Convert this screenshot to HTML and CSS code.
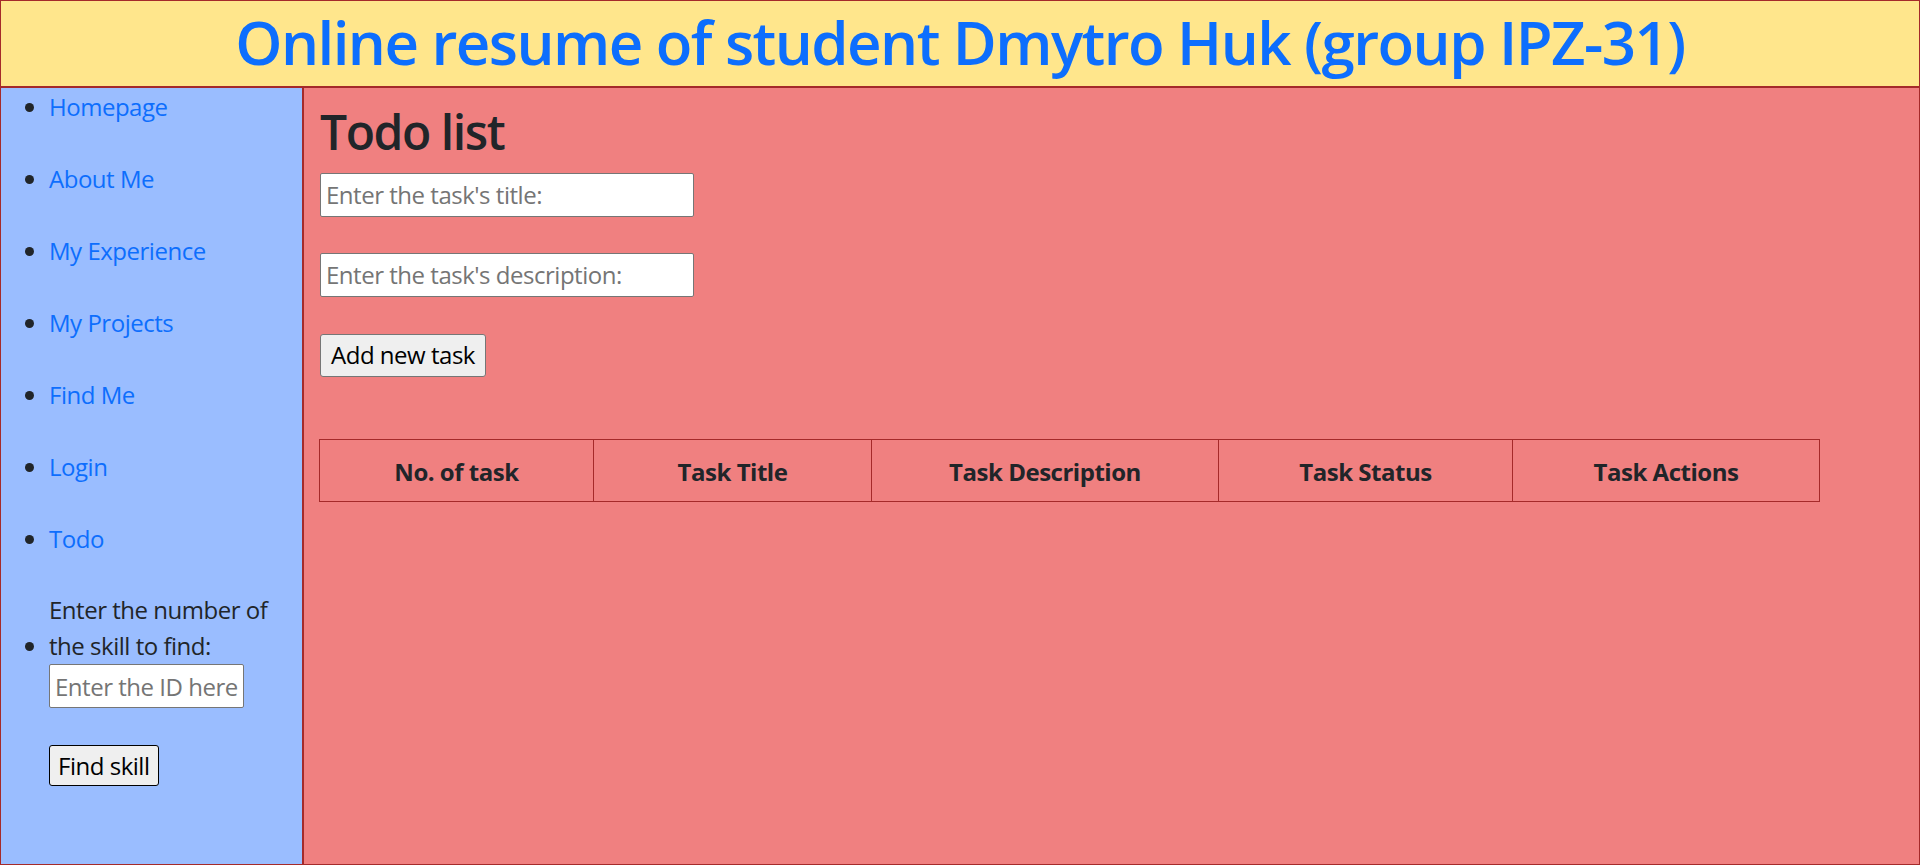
FILE: index.html
```html
<!DOCTYPE html>
<html lang="en">
<head>
<meta charset="utf-8">
<title>Todo list</title>
<link rel="stylesheet" href="styles.css">
</head>
<body>
<header class="site-header">
  <h1 class="site-title">Online resume of student Dmytro Huk (group IPZ-31)</h1>
</header>
<div class="layout">
  <nav class="sidebar">
    <ul class="nav-list">
      <li><a href="#">Homepage</a></li>
      <li><a href="#">About Me</a></li>
      <li><a href="#">My Experience</a></li>
      <li><a href="#">My Projects</a></li>
      <li><a href="#">Find Me</a></li>
      <li><a href="#">Login</a></li>
      <li><a href="#">Todo</a></li>
      <li class="skill-item">
        <label class="skill-label" for="skill-id">Enter the number of the skill to find:</label>
        <div class="skill-form">
          <input class="field field-small" id="skill-id" type="text" placeholder="Enter the ID here">
          <button class="btn btn-dark-border" type="button">Find skill</button>
        </div>
      </li>
    </ul>
  </nav>
  <main class="content">
    <h2 class="page-title">Todo list</h2>
    <div class="task-form">
      <input class="field field-wide" type="text" placeholder="Enter the task's title:">
      <input class="field field-wide" type="text" placeholder="Enter the task's description:">
      <button class="btn btn-add" type="button">Add new task</button>
    </div>
    <table class="task-table">
      <colgroup>
        <col class="c1"><col class="c2"><col class="c3"><col class="c4"><col class="c5">
      </colgroup>
      <thead>
        <tr>
          <th>No. of task</th>
          <th>Task Title</th>
          <th>Task Description</th>
          <th>Task Status</th>
          <th>Task Actions</th>
        </tr>
      </thead>
      <tbody></tbody>
    </table>
  </main>
</div>
</body>
</html>
```

FILE: styles.css
```css
* { box-sizing: border-box; }

html, body {
  margin: 0;
  height: 100%;
}

body {
  font-family: "Open Sans", "Noto Sans", sans-serif;
  font-size: 24px;
  line-height: 1.5;
  letter-spacing: -0.02em;
  color: #212529;
  background: #fff;
  display: flex;
  flex-direction: column;
  overflow: hidden;
}

.site-header {
  background: #ffe68c;
  border: 1px solid #a52a2a;
  height: 87px;
  padding-top: 5px;
}

.site-title {
  margin: 0;
  font-size: 60px;
  font-weight: 600;
  line-height: 72px;
  letter-spacing: -0.026em;
  color: #0d6efd;
  text-align: center;
}

.layout {
  flex: 1;
  display: flex;
  min-height: 0;
}

.sidebar {
  width: 303px;
  flex: none;
  background: #9abdff;
  border: 1px solid #a52a2a;
}

.nav-list {
  margin: 0;
  padding: 1px 0 0 48px;
}

.nav-list li {
  margin-bottom: 36px;
}

.nav-list a {
  color: #0d6efd;
  text-decoration: none;
}

.skill-item {
  margin-top: -1px;
}

.skill-label {
  display: inline-block;
}

.skill-form {
  display: flex;
  flex-direction: column;
  align-items: flex-start;
  gap: 37px;
}

.content {
  flex: 1;
  background: #f08080;
  border: 1px solid #a52a2a;
  padding: 15px 16px 0 16px;
}

.page-title {
  margin: 0 0 12px;
  font-size: 48px;
  font-weight: 600;
  line-height: 1.2;
  letter-spacing: -0.03em;
}

.task-form {
  display: flex;
  flex-direction: column;
  align-items: flex-start;
  gap: 36px;
}

.field {
  font-family: inherit;
  font-size: 24px;
  letter-spacing: -0.02em;
  height: 44px;
  padding: 2px 5px;
  border: 1px solid #767676;
  border-radius: 2px;
  background: #fff;
  color: #212529;
}

.field::placeholder {
  color: #757575;
}

.field-wide { width: 374px; }
.field-small { width: 195px; }

.btn {
  font-family: inherit;
  font-size: 24px;
  letter-spacing: -0.02em;
  height: 43px;
  padding: 0 10px;
  background: #efefef;
  border: 1px solid #767676;
  border-radius: 3px;
  color: #000;
  line-height: 1;
}

.btn-add {
  margin-top: 1px;
}

.btn-dark-border {
  border-color: #000;
  height: 41px;
  padding: 0 8px;
}

.task-table {
  margin-top: 62px;
  margin-left: -1px;
  width: 1500px;
  table-layout: fixed;
  border-collapse: collapse;
}

.c1 { width: 274px; }
.c2 { width: 278px; }
.c3 { width: 347px; }
.c4 { width: 294px; }
.c5 { width: 307px; }

.task-table th {
  border: 1px solid #a52a2a;
  padding: 14px 8px 11px;
  font-weight: 700;
  text-align: center;
  line-height: 36px;
}
```
